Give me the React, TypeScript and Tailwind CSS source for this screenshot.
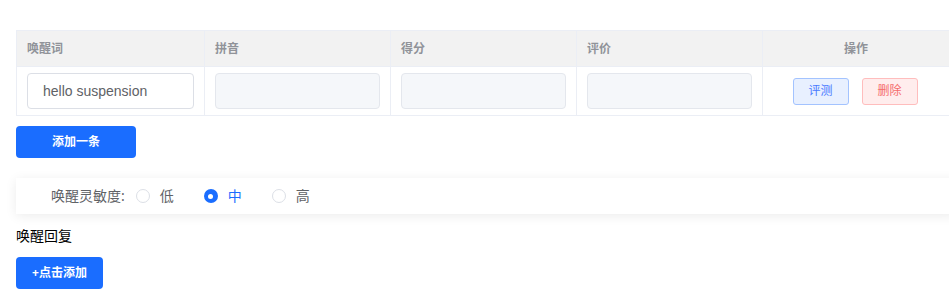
import { useState } from "react";

const font = { fontFamily: '"Noto Sans", "Noto Sans CJK SC", sans-serif' };

function Radio({ label, checked, onClick }: { label: string; checked: boolean; onClick: () => void }) {
  return (
    <label className="flex cursor-pointer items-center" onClick={onClick}>
      <span
        className={
          checked
            ? "flex h-[14px] w-[14px] items-center justify-center rounded-full bg-[#1a6dff]"
            : "h-[14px] w-[14px] rounded-full border border-[#dcdfe6] bg-white"
        }
      >
        {checked ? <span className="h-[5px] w-[5px] rounded-full bg-white" /> : null}
      </span>
      <span className={checked ? "ml-[10px] text-sm text-[#1a6dff]" : "ml-[10px] text-sm text-[#606266]"}>{label}</span>
    </label>
  );
}

export default function App() {
  const [level, setLevel] = useState("中");
  const [word, setWord] = useState("hello suspension");

  return (
    <div className="h-[308px] w-[949px] overflow-hidden bg-white pl-4 pt-[30px]" style={font}>
      <table className="w-[933px] table-fixed border-collapse text-xs">
        <colgroup>
          <col className="w-[188px]" />
          <col className="w-[186px]" />
          <col className="w-[186px]" />
          <col className="w-[186px]" />
          <col className="w-[187px]" />
        </colgroup>
        <thead>
          <tr className="h-[36px] bg-[#f2f2f2] text-[#909399]">
            <th className="border border-[#ebeef5] pl-[10px] text-left font-bold">唤醒词</th>
            <th className="border border-[#ebeef5] pl-[10px] text-left font-bold">拼音</th>
            <th className="border border-[#ebeef5] pl-[10px] text-left font-bold">得分</th>
            <th className="border border-[#ebeef5] pl-[10px] text-left font-bold">评价</th>
            <th className="border border-[#ebeef5] text-center font-bold">操作</th>
          </tr>
        </thead>
        <tbody>
          <tr className="h-[49px]">
            <td className="border border-[#ebeef5] px-[10px]">
              <input
                className="h-9 w-full rounded border border-[#dcdfe6] px-[15px] text-sm text-[#606266] outline-none"
                style={{ fontFamily: '"Liberation Sans", Arial, sans-serif' }}
                value={word}
                onChange={(event) => setWord(event.target.value)}
              />
            </td>
            <td className="border border-[#ebeef5] px-[10px]">
              <input className="h-9 w-full rounded border border-[#e4e7ed] bg-[#f5f7fa] outline-none" disabled />
            </td>
            <td className="border border-[#ebeef5] px-[10px]">
              <input className="h-9 w-full rounded border border-[#e4e7ed] bg-[#f5f7fa] outline-none" disabled />
            </td>
            <td className="border border-[#ebeef5] px-[10px]">
              <input className="h-9 w-full rounded border border-[#e4e7ed] bg-[#f5f7fa] outline-none" disabled />
            </td>
            <td className="border border-[#ebeef5]">
              <div className="flex items-center justify-center gap-[13px] pr-[2px]">
                <button className="h-[27px] w-14 rounded-[3px] border border-[#a3c3ff] bg-[#e8f0ff] text-xs text-[#4a7bff]">评测</button>
                <button className="h-[27px] w-14 rounded-[3px] border border-[#ffbdbd] bg-[#ffeded] text-xs text-[#f56c6c]">删除</button>
              </div>
            </td>
          </tr>
        </tbody>
      </table>
      <button className="mt-[10px] h-8 w-[120px] rounded bg-[#1a6dff] text-xs font-bold text-white">添加一条</button>
      <div className="mt-5 flex h-9 w-[940px] items-center bg-white pl-[35px] shadow-[0_2px_12px_rgba(0,0,0,0.08)]">
        <span className="mr-[11px] text-sm text-[#606266]">唤醒灵敏度:</span>
        <div className="flex items-center gap-[30px]">
          {["低", "中", "高"].map((item) => (
            <Radio key={item} label={item} checked={level === item} onClick={() => setLevel(item)} />
          ))}
        </div>
      </div>
      <div className="mt-3 text-sm leading-5 text-black">唤醒回复</div>
      <button className="mt-[11px] h-8 w-[87px] rounded bg-[#1a6dff] text-xs font-bold text-white">+点击添加</button>
    </div>
  );
}
